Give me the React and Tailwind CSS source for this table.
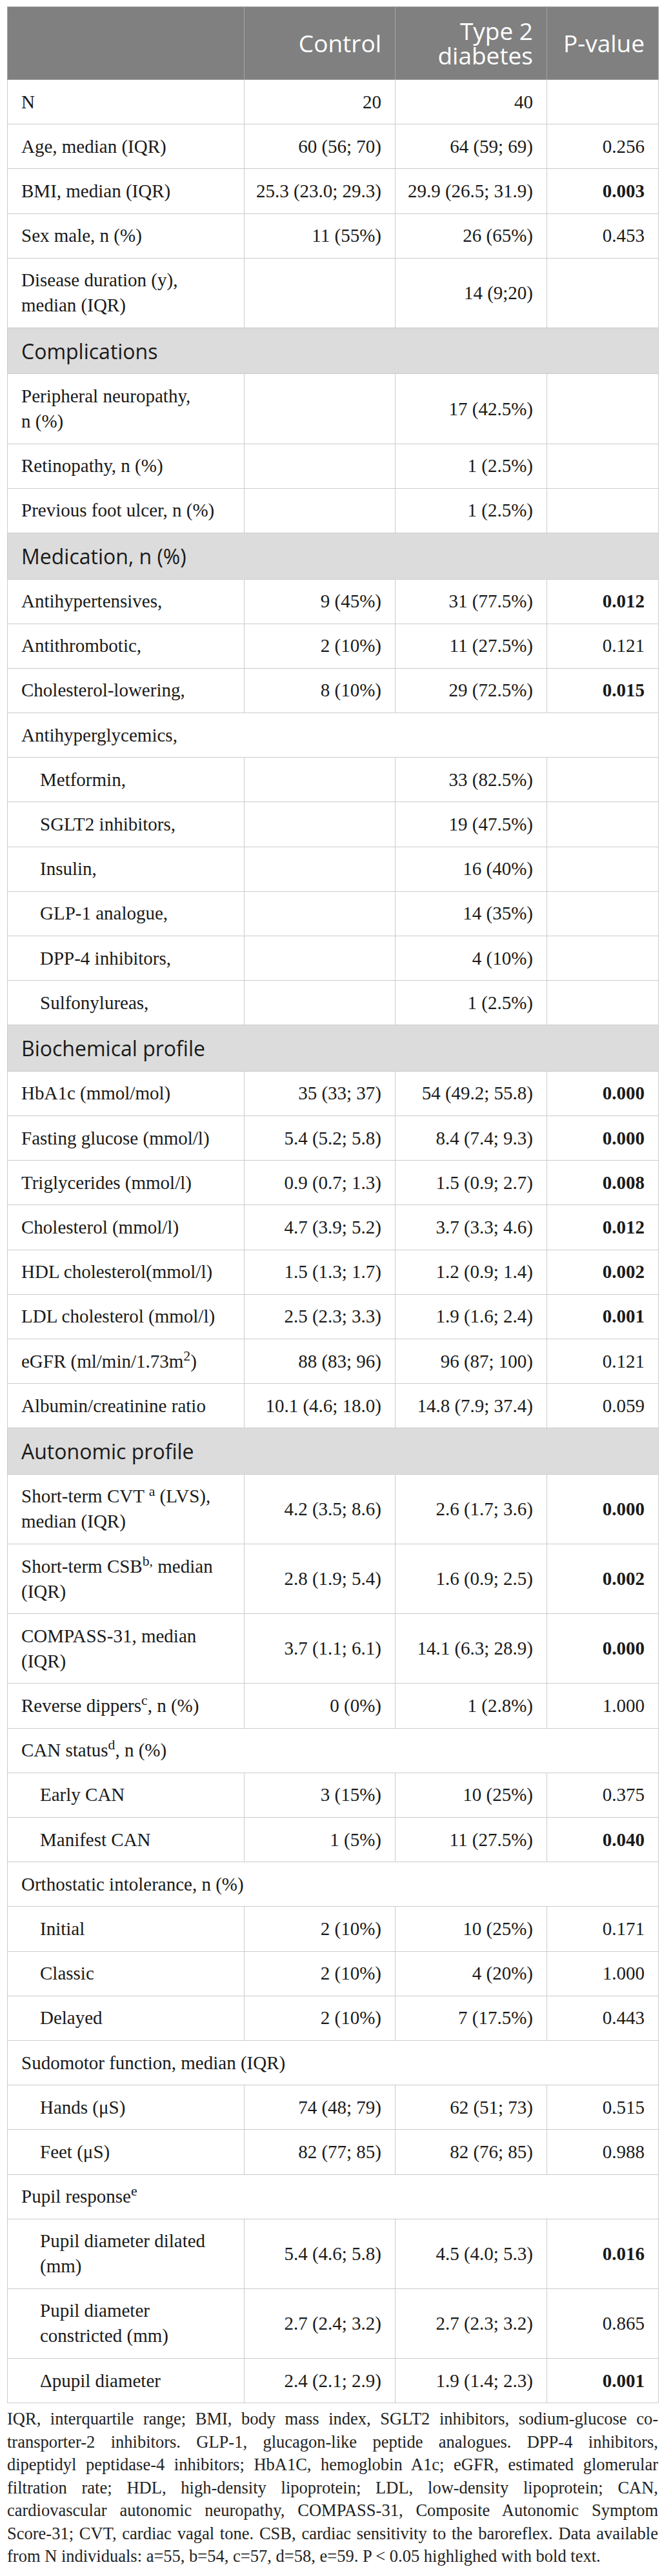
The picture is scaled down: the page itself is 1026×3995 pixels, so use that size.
// Baseline characteristics table (control vs type 2 diabetes)

const rows = [
  { label: 'N', c: '20', t: '40', p: '' },
  { label: 'Age, median (IQR)', c: '60 (56; 70)', t: '64 (59; 69)', p: '0.256' },
  { label: 'BMI, median (IQR)', c: '25.3 (23.0; 29.3)', t: '29.9 (26.5; 31.9)', p: '0.003', bold: true },
  { label: 'Sex male, n (%)', c: '11 (55%)', t: '26 (65%)', p: '0.453' },
  { label: <>Disease duration (y),<br />median (IQR)</>, c: '', t: '14 (9;20)', p: '' },
  { section: 'Complications' },
  { label: <>Peripheral neuropathy,<br />n (%)</>, c: '', t: '17 (42.5%)', p: '' },
  { label: 'Retinopathy, n (%)', c: '', t: '1 (2.5%)', p: '' },
  { label: 'Previous foot ulcer, n (%)', c: '', t: '1 (2.5%)', p: '' },
  { section: 'Medication, n (%)' },
  { label: 'Antihypertensives,', c: '9 (45%)', t: '31 (77.5%)', p: '0.012', bold: true },
  { label: 'Antithrombotic,', c: '2 (10%)', t: '11 (27.5%)', p: '0.121' },
  { label: 'Cholesterol-lowering,', c: '8 (10%)', t: '29 (72.5%)', p: '0.015', bold: true },
  { span: 'Antihyperglycemics,' },
  { label: 'Metformin,', indent: true, c: '', t: '33 (82.5%)', p: '' },
  { label: 'SGLT2 inhibitors,', indent: true, c: '', t: '19 (47.5%)', p: '' },
  { label: 'Insulin,', indent: true, c: '', t: '16 (40%)', p: '' },
  { label: 'GLP-1 analogue,', indent: true, c: '', t: '14 (35%)', p: '' },
  { label: 'DPP-4 inhibitors,', indent: true, c: '', t: '4 (10%)', p: '' },
  { label: 'Sulfonylureas,', indent: true, c: '', t: '1 (2.5%)', p: '' },
  { section: 'Biochemical profile' },
  { label: 'HbA1c (mmol/mol)', c: '35 (33; 37)', t: '54 (49.2; 55.8)', p: '0.000', bold: true },
  { label: 'Fasting glucose (mmol/l)', c: '5.4 (5.2; 5.8)', t: '8.4 (7.4; 9.3)', p: '0.000', bold: true },
  { label: 'Triglycerides (mmol/l)', c: '0.9 (0.7; 1.3)', t: '1.5 (0.9; 2.7)', p: '0.008', bold: true },
  { label: 'Cholesterol (mmol/l)', c: '4.7 (3.9; 5.2)', t: '3.7 (3.3; 4.6)', p: '0.012', bold: true },
  { label: 'HDL cholesterol(mmol/l)', c: '1.5 (1.3; 1.7)', t: '1.2 (0.9; 1.4)', p: '0.002', bold: true },
  { label: 'LDL cholesterol (mmol/l)', c: '2.5 (2.3; 3.3)', t: '1.9 (1.6; 2.4)', p: '0.001', bold: true },
  { label: <>eGFR (ml/min/1.73m<sup>2</sup>)</>, c: '88 (83; 96)', t: '96 (87; 100)', p: '0.121' },
  { label: 'Albumin/creatinine ratio', c: '10.1 (4.6; 18.0)', t: '14.8 (7.9; 37.4)', p: '0.059' },
  { section: 'Autonomic profile' },
  { label: <>Short-term CVT <sup>a</sup> (LVS),<br />median (IQR)</>, c: '4.2 (3.5; 8.6)', t: '2.6 (1.7; 3.6)', p: '0.000', bold: true },
  { label: <>Short-term CSB<sup>b,</sup> median<br />(IQR)</>, c: '2.8 (1.9; 5.4)', t: '1.6 (0.9; 2.5)', p: '0.002', bold: true },
  { label: <>COMPASS-31, median<br />(IQR)</>, c: '3.7 (1.1; 6.1)', t: '14.1 (6.3; 28.9)', p: '0.000', bold: true },
  { label: <>Reverse dippers<sup>c</sup>, n (%)</>, c: '0 (0%)', t: '1 (2.8%)', p: '1.000' },
  { span: <>CAN status<sup>d</sup>, n (%)</> },
  { label: 'Early CAN', indent: true, c: '3 (15%)', t: '10 (25%)', p: '0.375' },
  { label: 'Manifest CAN', indent: true, c: '1 (5%)', t: '11 (27.5%)', p: '0.040', bold: true },
  { span: 'Orthostatic intolerance, n (%)' },
  { label: 'Initial', indent: true, c: '2 (10%)', t: '10 (25%)', p: '0.171' },
  { label: 'Classic', indent: true, c: '2 (10%)', t: '4 (20%)', p: '1.000' },
  { label: 'Delayed', indent: true, c: '2 (10%)', t: '7 (17.5%)', p: '0.443' },
  { span: 'Sudomotor function, median (IQR)' },
  { label: 'Hands (μS)', indent: true, c: '74 (48; 79)', t: '62 (51; 73)', p: '0.515' },
  { label: 'Feet (μS)', indent: true, c: '82 (77; 85)', t: '82 (76; 85)', p: '0.988' },
  { span: <>Pupil response<sup>e</sup></> },
  { label: <>Pupil diameter dilated<br />(mm)</>, indent: true, c: '5.4 (4.6; 5.8)', t: '4.5 (4.0; 5.3)', p: '0.016', bold: true },
  { label: <>Pupil diameter<br />constricted (mm)</>, indent: true, c: '2.7 (2.4; 3.2)', t: '2.7 (2.3; 3.2)', p: '0.865' },
  { label: 'Δpupil diameter', indent: true, c: '2.4 (2.1; 2.9)', t: '1.9 (1.4; 2.3)', p: '0.001', bold: true },
];

// footnote lines are kept as in the source so the justified breaks match
const notes = [
  'IQR, interquartile range; BMI, body mass index, SGLT2 inhibitors, sodium-glucose co-',
  'transporter-2 inhibitors. GLP-1, glucagon-like peptide analogues. DPP-4 inhibitors,',
  'dipeptidyl peptidase-4 inhibitors; HbA1C, hemoglobin A1c; eGFR, estimated glomerular',
  'filtration rate; HDL, high-density lipoprotein; LDL, low-density lipoprotein; CAN,',
  'cardiovascular autonomic neuropathy, COMPASS-31, Composite Autonomic Symptom',
  'Score-31; CVT, cardiac vagal tone. CSB, cardiac sensitivity to the baroreflex. Data available',
];
const lastNote = 'from N individuals: a=55, b=54, c=57, d=58, e=59. P < 0.05 highlighed with bold text.';

const cell = 'border border-[#cccccc] py-[14.6px] leading-[39px] align-middle';
const num = 'border border-[#cccccc] py-[14.6px] pl-[10px] pr-[21px] leading-[39px] align-middle text-right whitespace-nowrap';
const head = 'border border-[#a3a3a3] bg-[#808080] py-[18px] pl-[10px] pr-[21px] text-right align-middle font-normal';

export default function App() {
  return (
    <div className="bg-white min-h-screen pt-[10px] pl-[11px] pb-[10px] text-[#1a1a1a]">
      <table className="w-[1009px] table-fixed border-collapse font-['Liberation_Serif',serif] text-[29px]">
        <colgroup>
          <col className="w-[367px]" />
          <col className="w-[234px]" />
          <col className="w-[235px]" />
          <col className="w-[173px]" />
        </colgroup>
        <thead className="font-['Open_Sans',sans-serif] text-[37px] leading-[38px] text-white">
          <tr>
            <th className={head}></th>
            <th className={head}>Control</th>
            <th className={head}>Type 2<br />diabetes</th>
            <th className={head}>P-value</th>
          </tr>
        </thead>
        <tbody>
          {rows.map((r, i) => {
            if (r.section) {
              return (
                <tr key={i}>
                  <td colSpan={4} className="border border-[#cccccc] bg-[#dcdcdc] py-[14.75px] pl-[21px] leading-[41px] font-['Open_Sans',sans-serif] text-[32px] text-[#1a1a1a]">
                    {r.section}
                  </td>
                </tr>
              );
            }
            if (r.span) {
              return (
                <tr key={i}>
                  <td colSpan={4} className={cell + ' pl-[21px]'}>{r.span}</td>
                </tr>
              );
            }
            return (
              <tr key={i}>
                <td className={cell + (r.indent ? ' pl-[50px] pr-[10px]' : ' pl-[21px] pr-[10px]')}>{r.label}</td>
                <td className={num}>{r.c}</td>
                <td className={num}>{r.t}</td>
                <td className={num + (r.bold ? ' font-bold' : '')}>{r.p}</td>
              </tr>
            );
          })}
        </tbody>
      </table>

      <div className="w-[1009px] mt-[7px] font-['Liberation_Serif',serif] text-[26.5px] leading-[35.5px] text-[#222222]">
        {notes.map((line, i) => (
          <div key={i} className="text-justify [text-align-last:justify]">{line}</div>
        ))}
        <div>{lastNote}</div>
      </div>
    </div>
  );
}
